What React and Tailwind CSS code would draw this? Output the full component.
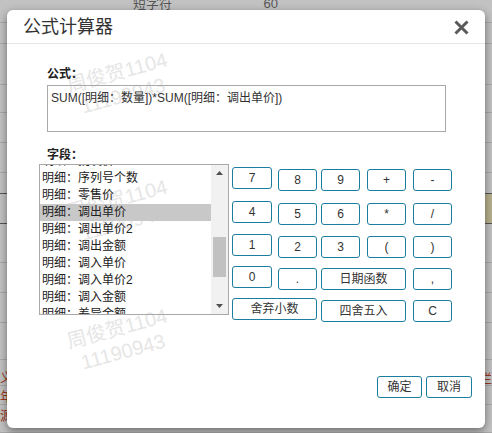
import { useState } from 'react'

const fields = [
  '明细：批发价',
  '明细：序列号个数',
  '明细：零售价',
  '明细：调出单价',
  '明细：调出单价2',
  '明细：调出金额',
  '明细：调入单价',
  '明细：调入单价2',
  '明细：调入金额',
  '明细：差异金额',
  '明细：备注',
]

// background table rows behind the dimmed overlay
const bgRows = [23, 21, 41, 28, 30, 30, 21, 30, 39, 30, 30, 37, 26, 19, 28]

function CalcButton({ label, w = 'w-[40px]', onClick }) {
  return (
    <button
      type="button"
      onClick={() => onClick(label)}
      className={`${w} h-[22px] shrink-0 rounded-[3px] border border-[#1b7ea0] bg-white text-[12px] leading-none text-[#333]`}
    >
      {label}
    </button>
  )
}

function Watermark({ top }) {
  return (
    <div
      className="pointer-events-none absolute left-[55px] w-[116px] -rotate-[15deg] text-center text-[20px] leading-[24px] text-[#e6e6e6]"
      style={{ top }}
    >
      <div>周俊贺1104</div>
      <div>11190943</div>
    </div>
  )
}

export default function App() {
  const [formula, setFormula] = useState('SUM([明细：数量])*SUM([明细：调出单价])')
  const [selected, setSelected] = useState('明细：调出单价')

  const add = (v) => {
    if (v === 'C') return setFormula('')
    setFormula((f) => f + v)
  }

  return (
    <div
      className="relative h-[433px] w-[492px] overflow-hidden bg-[#c2c2c2]"
      style={{ fontFamily: '"Liberation Sans", "Noto Sans CJK SC", sans-serif' }}
    >
      {/* dimmed page behind the dialog */}
      <div className="flex flex-col">
        {bgRows.map((h, i) => (
          <div
            key={i}
            className={`flex border-b ${i === 6 || i === 7 ? 'border-[#555]' : 'border-[#a8a8a8]'}`}
            style={{ height: h }}
          >
            <div className="flex-1" />
            <div className={`w-[12px] ${i === 7 ? 'bg-[#b7af8d]' : ''}`} />
          </div>
        ))}
      </div>
      <div className="absolute left-[128px] top-0 flex h-[10px] items-end text-[13px] leading-none text-[#555]">
        <span className="w-[70px] pl-[5px]">短字符</span>
        <span className="w-[80px] text-right">60</span>
      </div>
      <div className="absolute left-0 top-[368px] flex flex-col text-[13px] leading-[19px] text-[#9a3a22]">
        <span>义</span>
        <span>年</span>
        <span>源</span>
      </div>
      <div className="absolute right-0 top-[369px] text-[13px] text-[#9a3a22]">栏</div>

      {/* dialog */}
      <div className="absolute left-[7px] top-[10px] flex h-[418px] w-[478px] flex-col rounded-[6px] bg-white shadow-[0_3px_9px_rgba(0,0,0,0.45)]">
        <Watermark top={50} />
        <Watermark top={177} />
        <Watermark top={306} />

        <div className="relative flex h-[34px] items-center justify-between border-b border-[#e5e5e5] pl-[16px] pr-[16px]">
          <span className="text-[18px] leading-none text-[#333]">公式计算器</span>
          <svg width="15" height="15" viewBox="0 0 15 15" className="mt-[1px]">
            <path d="M1.5 1.5 L13.5 13.5 M13.5 1.5 L1.5 13.5" stroke="#5a5a5a" strokeWidth="3" />
          </svg>
        </div>

        <div className="relative pl-[40px] mt-[22px] text-[12px] font-bold leading-[16px] text-[#222]">公式：</div>
        <div className="relative ml-[40px] mt-[3px] h-[47px] w-[399px] border border-[#a9a9a9] px-[3px] pt-[5px] text-[12px] leading-[15px] text-[#333]">
          {formula}
        </div>

        <div className="relative pl-[40px] mt-[15px] text-[12px] font-bold leading-[16px] text-[#222]">字段：</div>

        <div className="relative ml-[32px] mt-[1px] flex">
          <div className="flex h-[151px] w-[190px] border border-[#a9a9a9]">
            <div className="flex-1 overflow-hidden">
              <div className="-mt-[12px] flex flex-col">
                {fields.map((f) => (
                  <div
                    key={f}
                    onClick={() => setSelected(f)}
                    className={`h-[17px] pl-[2px] text-[12px] leading-[17px] text-[#222] ${
                      selected === f ? 'bg-[#c8c8c8]' : ''
                    }`}
                  >
                    {f}
                  </div>
                ))}
              </div>
            </div>
            <div className="flex w-[17px] flex-col items-center bg-[#f1f1f1]">
              <svg width="7" height="4" viewBox="0 0 7 4" className="mt-[6px]">
                <path d="M0 4 L3.5 0 L7 4 Z" fill="#505050" />
              </svg>
              <div className="mt-[62px] h-[40px] w-[13px] bg-[#c1c1c1]" />
              <svg width="7" height="4" viewBox="0 0 7 4" className="mt-auto mb-[6px]">
                <path d="M0 0 L7 0 L3.5 4 Z" fill="#505050" />
              </svg>
            </div>
          </div>

          <div className="ml-[3px] mt-[3px] flex flex-col">
            <div className="flex">
              <CalcButton label="7" onClick={add} />
              <div className="ml-[6px]"><CalcButton label="8" w="w-[39px]" onClick={add} /></div>
              <div className="ml-[4px]"><CalcButton label="9" w="w-[39px]" onClick={add} /></div>
              <div className="ml-[7px]"><CalcButton label="+" w="w-[39px]" onClick={add} /></div>
              <div className="ml-[7px]"><CalcButton label="-" w="w-[39px]" onClick={add} /></div>
            </div>
            <div className="mt-[10px] flex">
              <CalcButton label="4" onClick={add} />
              <div className="ml-[6px]"><CalcButton label="5" w="w-[39px]" onClick={add} /></div>
              <div className="ml-[4px]"><CalcButton label="6" w="w-[39px]" onClick={add} /></div>
              <div className="ml-[7px]"><CalcButton label="*" w="w-[39px]" onClick={add} /></div>
              <div className="ml-[7px]"><CalcButton label="/" w="w-[39px]" onClick={add} /></div>
            </div>
            <div className="mt-[9px] flex">
              <CalcButton label="1" onClick={add} />
              <div className="ml-[6px]"><CalcButton label="2" w="w-[39px]" onClick={add} /></div>
              <div className="ml-[4px]"><CalcButton label="3" w="w-[39px]" onClick={add} /></div>
              <div className="ml-[7px]"><CalcButton label="(" w="w-[39px]" onClick={add} /></div>
              <div className="ml-[7px]"><CalcButton label=")" w="w-[39px]" onClick={add} /></div>
            </div>
            <div className="mt-[8px] flex">
              <CalcButton label="0" onClick={add} />
              <div className="ml-[6px]"><CalcButton label="." w="w-[39px]" onClick={add} /></div>
              <div className="ml-[4px]"><CalcButton label="日期函数" w="w-[85px]" onClick={add} /></div>
              <div className="ml-[7px]"><CalcButton label="," w="w-[39px]" onClick={add} /></div>
            </div>
            <div className="mt-[8px] flex">
              <CalcButton label="舍弃小数" w="w-[85px]" onClick={add} />
              <div className="ml-[4px]"><CalcButton label="四舍五入" w="w-[85px]" onClick={add} /></div>
              <div className="ml-[7px]"><CalcButton label="C" w="w-[39px]" onClick={add} /></div>
            </div>
          </div>
        </div>

        <div className="relative mb-[30px] mt-auto flex justify-end gap-[4px] pr-[13px]">
          <button
            type="button"
            className="h-[22px] w-[45px] rounded-[3px] border border-[#1b7ea0] bg-white text-[12px] leading-none text-[#333]"
          >
            确定
          </button>
          <button
            type="button"
            className="h-[22px] w-[46px] rounded-[3px] border border-[#1b7ea0] bg-white text-[12px] leading-none text-[#333]"
          >
            取消
          </button>
        </div>
      </div>
    </div>
  )
}
